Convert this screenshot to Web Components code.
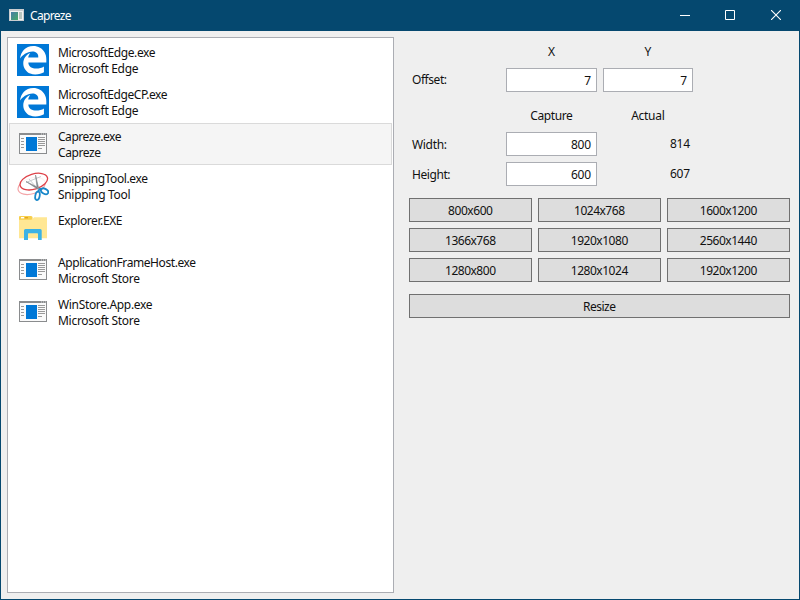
<!DOCTYPE html>
<html lang="en">
<head>
<meta charset="utf-8">
<title>Capreze</title>
<style>
html,body{margin:0;height:100%}
body{font:12px/16px "Noto Sans","Open Sans",sans-serif;color:#111;overflow:hidden}
</style>
</head>
<body>
<app-window></app-window>
<script>
function define(name, html, ready) {
  const t = document.createElement('template');
  t.innerHTML = html;
  customElements.define(name, class extends HTMLElement {
    connectedCallback() {
      if (this.shadowRoot) return;
      this.attachShadow({mode: 'open'}).append(t.content.cloneNode(true));
      if (ready) ready.call(this, this.shadowRoot);
    }
  });
}

// Text run tracked to a given advance width (attribute w, in pixels).
define('ui-text', `<style>:host{display:block;white-space:pre}span{display:inline-block}</style><span><slot></slot></span>`, function (root) {
  const w = parseFloat(this.getAttribute('w'));
  const n = this.textContent.length;
  const s = root.querySelector('span');
  if (w && n > 1) {
    const d = (w - s.getBoundingClientRect().width) / (n - 1);
    s.style.letterSpacing = d + 'px';
    s.style.marginRight = -d + 'px';
  }
});

const icons = {
  edge: `<rect width="32" height="32" fill="#0078d7"/><path fill="#fff" transform="translate(1.5 1.6) scale(.0572)" d="M26.06 227.68C40.62 113.21 119 7.72 258.89 8 343.91 8 416.5 47.88 457.48 121.27c21.05 37.94 28.81 78.4 28.81 122.4v52.07H172.21C173.6 424.23 363.6 419.8 444.47 363.31V467.76c-47.36 28.53-156.78 53.17-240.13 21.33-70.62-27.16-119.92-100.55-120.75-172-1.1-92.22 45.7-153.42 120.75-188.32-15.79 19.93-27.97 41.54-34.34 78.93H345.85c10.25-105-99.42-105-99.42-105C143.13 106.3 68.48 166.37 26.06 227.68z"/>`,
  app: `<rect x="2.5" y="5.5" width="27" height="20" fill="#fafafa" stroke="#8a8c8e"/><path fill="#8a8c8e" d="M2 5h28v2H2z"/><path fill="#d8d8d8" d="M24 5.5h1v1h-1zM26 5.5h1v1h-1zM28 5.5h1v1h-1z"/><path fill="#0078d7" d="M9 9h11v14H9z"/><path stroke="#999" d="M4 10.5h3M4 13.5h3M4 16.5h3M4 19.5h3M21 9.5h7M21 11.5h7M21 13.5h7M21 15.5h7M21 17.5h7M21 20.5h4"/>`,
  snip: `<g fill="none"><ellipse cx="14.6" cy="16" rx="14" ry="7.8" stroke="#f3a5a8" stroke-width="1.2" transform="rotate(-17 14.6 16)"/><ellipse cx="16.8" cy="11.6" rx="14.2" ry="7.6" fill="#fff" fill-opacity=".85" stroke="#de4148" stroke-width="1.3" transform="rotate(-17 16.8 11.6)"/><path stroke="#c9cdd0" d="M9 12.5l15-6M12 9l7 8"/><path fill="#777" stroke="#8d9297" stroke-width=".7" d="M9 11.5L22 18 20.5 19zM18.5 5l1.7 13.5h1.5z"/><ellipse cx="27.6" cy="21.3" rx="3.9" ry="2.5" stroke="#1988ca" stroke-width="1.8" transform="rotate(28 27.6 21.3)"/><ellipse cx="20.5" cy="25.8" rx="2.2" ry="4.3" stroke="#1988ca" stroke-width="1.8" transform="rotate(10 20.5 25.8)"/><path stroke="#1988ca" stroke-width="1.8" d="M21 21l2-2.2 2 .6"/></g>`,
  folder: `<path fill="#ffe794" d="M2 6.5h14l1-1.2h13v21H2z"/><path fill="#f7cf4c" d="M2 5q0-1 1-1h11q1.6 0 1.6 1.8T14 7.7H2z"/><path fill="#fff" d="M4 5h3v1.4H4z"/><path fill="#e5a51d" d="M8 5h3v1.4H8z"/><path fill="#3bb2e5" d="M7 28V18.5q0-1.5 1.5-1.5h14.7q1.5 0 1.5 1.5V28H21v-6q0-.7-.7-.7h-8.600q-.7 0-.7.7v6z"/>`
};

define('ui-icon', `<style>:host{display:block;width:32px;height:32px}svg{display:block}</style><svg width="32" height="32" viewBox="0 0 32 32"></svg>`, function (root) {
  root.querySelector('svg').innerHTML = icons[this.getAttribute('name')];
});

define('process-item', `<style>
:host{display:flex;box-sizing:border-box;height:42px;padding:4px 7px;gap:9px;border:1px solid transparent}
:host([selected]){background:#f5f5f5;border-color:#dadada}
.t{line-height:16px;padding-top:1px}
</style><ui-icon></ui-icon><div class="t"><slot></slot></div>`, function (root) {
  const i = document.createElement('ui-icon');
  i.setAttribute('name', this.getAttribute('icon'));
  root.querySelector('ui-icon').replaceWith(i);
});

define('text-box', `<style>:host{display:flex;box-sizing:border-box;height:24px;background:#fff;border:1px solid #abadb3;justify-content:flex-end;padding:4px 5px 0 0;line-height:16px}</style><slot></slot>`);

define('push-button', `<style>:host{display:flex;box-sizing:border-box;height:24px;background:#ddd;border:1px solid #707070;justify-content:center;padding-top:4px}</style><slot></slot>`);

define('title-bar', `<style>
:host{display:flex;height:31px;background:#05486f;color:#fff;align-items:center}
svg{display:block}
.logo{margin:1px 5px 0 9px}
ui-text{flex:1}
.b{width:46px;display:flex;justify-content:center}
.b svg{margin-top:-1px}
.min{width:44px}
</style>
<svg class="logo" width="16" height="16" viewBox="0 0 16 16"><defs><linearGradient id="g" x2="1" y2="1"><stop stop-color="#477ca7"/><stop offset="1" stop-color="#46a967"/></linearGradient></defs><path fill="#c9cdd0" d="M0 1h15v12H0z"/><path fill="#f2f2f2" d="M1 3h13v9H1z"/><path fill="url(#g)" d="M2 4h7v8H2z"/><path fill="#b9c6c0" d="M10 4h3v7h-3z"/></svg>
<ui-text w="41.5">Capreze</ui-text>
<div class="b min"><svg width="10" height="10"><path d="M0 5.5h10" stroke="#fff"/></svg></div>
<div class="b"><svg width="10" height="10"><path d="M.5.5h9v9h-9z" fill="none" stroke="#fff"/></svg></div>
<div class="b"><svg width="10" height="10"><path d="M0 0l10 10M10 0L0 10" stroke="#fff" stroke-width="1.1"/></svg></div>`);

define('size-form', `<style>
:host{display:grid;grid-template-columns:97px 91px 6px 90px;grid-template-rows:31px 24px 40px 24px 6px 24px;width:284px}
.h{justify-self:center;align-self:start;padding-top:7px}
.h.c{padding-top:16px}
.l{padding:4px 0 0 3px}
.l.s{padding-top:5px}
.v{justify-self:end;padding:4px 3px 0 0}
.x{grid-column:2}.y{grid-column:4}.r6{grid-row:6}
</style>
<ui-text class="h x">X</ui-text><ui-text class="h y">Y</ui-text>
<ui-text class="l" w="35">Offset:</ui-text><text-box class="x"><ui-text>7</ui-text></text-box><text-box class="y"><ui-text>7</ui-text></text-box>
<ui-text class="h c x" w="42.5">Capture</ui-text><ui-text class="h c y" w="33.5">Actual</ui-text>
<ui-text class="l s" w="35">Width:</ui-text><text-box class="x"><ui-text w="20">800</ui-text></text-box><ui-text class="v y" w="20">814</ui-text>
<ui-text class="l s r6" w="38.5">Height:</ui-text><text-box class="x r6"><ui-text w="20">600</ui-text></text-box><ui-text class="v y r6" w="20">607</ui-text>`);

define('preset-grid', `<style>:host{display:grid;grid-template-columns:repeat(3,1fr);gap:6px}</style>
<push-button><ui-text w="45">800x600</ui-text></push-button><push-button><ui-text w="51">1024x768</ui-text></push-button><push-button><ui-text w="57.5">1600x1200</ui-text></push-button>
<push-button><ui-text w="51">1366x768</ui-text></push-button><push-button><ui-text w="57.5">1920x1080</ui-text></push-button><push-button><ui-text w="57.5">2560x1440</ui-text></push-button>
<push-button><ui-text w="51">1280x800</ui-text></push-button><push-button><ui-text w="57.5">1280x1024</ui-text></push-button><push-button><ui-text w="57.5">1920x1200</ui-text></push-button>`);

define('app-window', `<style>
:host{display:flex;flex-direction:column;box-sizing:border-box;width:800px;height:600px;background:#05486f;padding:0 1px 1px}
title-bar{margin-left:-1px}
.body{flex:1;display:flex;background:#efefef;padding:6px 9px 6px 6px;gap:15px}
.list{box-sizing:border-box;width:387px;background:#fff;border:1px solid #abadb3;padding:1px}
.side{flex:1;display:flex;flex-direction:column;gap:12px}
</style>
<title-bar></title-bar>
<div class="body">
<div class="list">
<process-item icon="edge"><ui-text w="97.5">MicrosoftEdge.exe</ui-text><ui-text w="80.5">Microsoft Edge</ui-text></process-item>
<process-item icon="edge"><ui-text w="109.500">MicrosoftEdgeCP.exe</ui-text><ui-text w="80.5">Microsoft Edge</ui-text></process-item>
<process-item icon="app" selected><ui-text w="63.5">Capreze.exe</ui-text><ui-text w="43">Capreze</ui-text></process-item>
<process-item icon="snip"><ui-text w="90">SnippingTool.exe</ui-text><ui-text w="72.5">Snipping Tool</ui-text></process-item>
<process-item icon="folder"><ui-text w="64.5">Explorer.EXE</ui-text></process-item>
<process-item icon="app"><ui-text w="138">ApplicationFrameHost.exe</ui-text><ui-text w="82">Microsoft Store</ui-text></process-item>
<process-item icon="app"><ui-text w="94.500">WinStore.App.exe</ui-text><ui-text w="82">Microsoft Store</ui-text></process-item>
</div>
<div class="side">
<size-form></size-form>
<preset-grid></preset-grid>
<push-button><ui-text w="33">Resize</ui-text></push-button>
</div>
</div>`);
</script>
</body>
</html>
